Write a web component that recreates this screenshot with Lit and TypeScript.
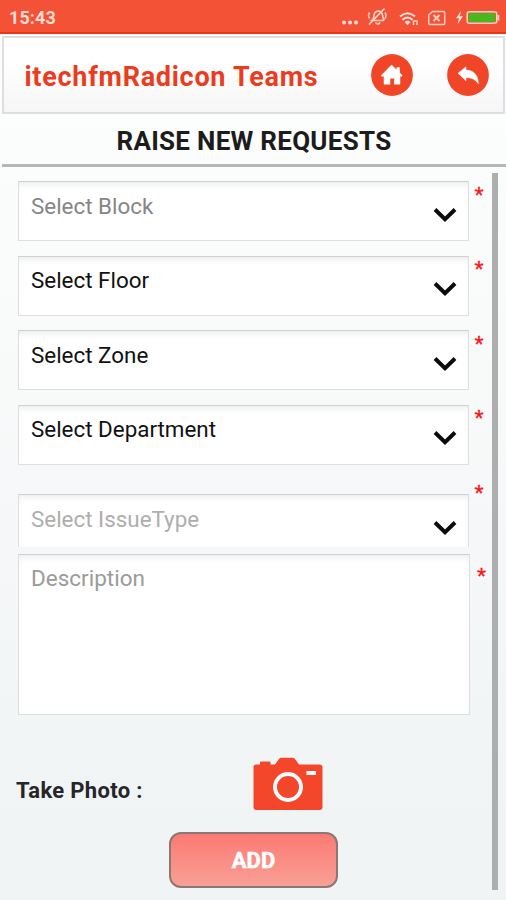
import { LitElement, html, css, svg } from "lit";
import { customElement, property } from "lit/decorators.js";
import { classMap } from "lit/directives/class-map.js";

@customElement("status-bar")
class StatusBar extends LitElement {
  static styles = css`
    :host { display: flex; box-sizing: border-box; height: 34px; background: #f35237;
      border-bottom: 2px solid #ee3413; color: #ffdcd2; align-items: center;
      justify-content: space-between; padding: 2px 5px 0 9px; }
    .time { font: 700 18px/30px Roboto, sans-serif; padding-top: 2px; letter-spacing: 0.1px; }
    svg { display: block; }
  `;
  render() {
    return html`
      <span class="time">15:43</span>
      <svg width="161" height="30" viewBox="340 2 161 30" fill="none" stroke="#ffd0c4" stroke-width="1.5">
        <g fill="#ffe0d8" stroke="none">
          <circle cx="344" cy="22.500" r="2" /><circle cx="350" cy="22.500" r="2" /><circle cx="356" cy="22.500" r="2" />
        </g>
        <path d="M370.500 20.500h13.500M372.500 20c2-2 1-5 2.200-7 1.200-2.200 4.800-2.500 6.500-.8 2 2 .8 5.300 3.300 8M375.500 22.500q2.500 3 4.500 0M369 24.500L384.500 8.500" stroke-width="1.7" />
        <path d="M369.500 12.500q-2 3 0 6M385 12.500q2 3 0 6" />
        <g stroke="#ffe0d8" stroke-width="2">
          <path d="M400 16.500q7.500-6.500 15 0M402.500 19.800q5-4.500 10 0" />
        </g>
        <path d="M404.500 22q3-2.500 6 0l-3 3.200z" fill="#ffe0d8" stroke="none" />
        <path d="M413.500 25v-4h3.500v4" stroke-width="1.500" />
        <path d="M432.500 11.500h11q1.200 0 1.200 1.200v10.600q0 1.200-1.200 1.200h-13.600q-1.200 0-1.200-1.200v-8.300z" />
        <path d="M433.500 15l6 6M439.500 15l-6 6" stroke-width="2" />
        <path d="M461 11l-5 7.300h3l-1.400 6 5.400-8h-3.200z" fill="#ffe0d8" stroke="none" />
        <rect x="467.200" y="11.700" width="29.500" height="11.500" rx="2" />
        <path d="M498.300 15v5.500" stroke-width="2" />
        <rect x="468.700" y="13.200" width="26.500" height="8.600" fill="#3fbd1d" stroke="none" />
        <path d="M474 13v9M479.300 13v9M484.600 13v9M490 13v9" stroke="#6aa524" stroke-width="1" />
      </svg>`;
  }
}

@customElement("round-button")
class RoundButton extends LitElement {
  @property() icon = "home";
  static styles = css`
    :host { display: block; width: 42px; height: 42px; }
    svg { display: block; }
  `;
  render() {
    const glyph = this.icon === "home"
      ? svg`<path d="M20.500 11L10.500 21.200v1h2.500v8h6v-6h4.400v6h5.600v-8h2v-1l-2.500-2.600v-5.100h-2.700v2.500z" />`
      : svg`<path d="M11 19.200L19 12.800v3.200c8 .2 12.500 5.600 12.300 13.800-2.700-4.200-6.300-6.300-12.300-6.100v3z" />`;
    return html`<svg width="42" height="42" viewBox="0 0 42 42">
      <circle cx="21" cy="21" r="20.900" fill="#f04527" />
      <g fill="#fff" stroke="#fff" stroke-width=".5" stroke-linejoin="round">${glyph}</g>
    </svg>`;
  }
}

@customElement("select-field")
class SelectField extends LitElement {
  @property() label = "";
  @property() tone = "active";
  @property({ type: Boolean }) clipped = false;
  static styles = css`
    :host { display: flex; align-items: flex-start; }
    .box { box-sizing: border-box; width: 451px; height: 60px; display: flex;
      justify-content: space-between; padding: 7.500px 11px 0 12px; background: #fff;
      border: 1.5px solid #dedfdf; border-top-color: #d0d2d2;
      box-shadow: inset 0 5px 7px -3px #e9ebeb; color: #111;
      font: 400 22.400px/32px Roboto, sans-serif; }
    .soft { color: #868686; }
    .faint { color: #aeaeae; }
    .clipped { height: 53px; border-bottom: 0; }
    svg { display: block; margin-top: 16px; }
    .star { margin: 1.500px 0 0 5.500px; color: #fc1414; font: 400 21px/24px Roboto, sans-serif; -webkit-text-stroke: 0.3px #fc1414; }
    .raised { margin-top: -13px; }
  `;
  render() {
    return html`
      <div class=${classMap({ box: true, soft: this.tone === "soft", faint: this.tone === "faint", clipped: this.clipped })}>
        <span>${this.label}</span>
        <svg width="24" height="18" viewBox="0 0 24 18" fill="none" stroke="#0b0b0b" stroke-width="3.900">
          <path d="M2 3.500l10 9.700 10-9.700" />
        </svg>
      </div>
      <span class=${classMap({ star: true, raised: this.clipped })}>*</span>`;
  }
}

@customElement("app-root")
class AppRoot extends LitElement {
  static styles = css`
    :host { display: flex; flex-direction: column; width: 506px; height: 900px; overflow: hidden;
      font-family: Roboto, sans-serif; background: linear-gradient(#fcfdfd 12%, #f1f4f5 90%); }
    header { box-sizing: border-box; height: 78px; margin: 2px 1px 0 2px; padding: 0 14px 0 20.500px;
      display: flex; align-items: center; gap: 34px; border: 2px solid #dcdfe2;
      background: linear-gradient(#fff 30%, #f6f6f6); }
    .brand { flex: 1; color: #ec3c20; font-size: 27px; font-weight: 700; letter-spacing: 0.720px; line-height: 34px; padding-top: 3px; white-space: nowrap; }
    h1 { box-sizing: border-box; height: 53px; margin: 0 0 0 2px; padding-top: 11px; text-align: center;
      font-size: 26px; line-height: 32px; font-weight: 700; letter-spacing: 0.280px; color: #1c1c1c; border-bottom: 3px solid #b5b7b7; }
    .body { display: flex; justify-content: space-between; height: 717px; margin: 6px 8px 0 16px; }
    .form { display: flex; flex-direction: column; width: 470px; padding-top: 8px; }
    .fields { display: flex; flex-direction: column; gap: 14.500px; padding-left: 2px; }
    .issue { margin-top: 15px; }
    .desc { display: flex; padding-left: 2px; margin-top: 7px; }
    .area { box-sizing: border-box; width: 453px; height: 161px; padding: 7px 12px; background: #fff;
      border: 1.5px solid #dedfdf; border-top-color: #cfd1d1; box-shadow: inset 0 5px 7px -3px #e9ebeb;
      color: #9b9b9b; font-size: 22.500px; line-height: 32px; }
    .star { color: #fc1414; font-size: 21px; line-height: 24px; margin: 10px 0 0 6.500px; -webkit-text-stroke: 0.3px #fc1414; }
    .photo { display: flex; align-items: flex-end; margin-top: 42px; }
    .caption { width: 236px; color: #262626; font-size: 22px; font-weight: 700; letter-spacing: 0.320px; line-height: 32px; padding-bottom: 4px; }
    svg { display: block; }
    button { box-sizing: border-box; width: 169px; height: 56px; margin: 21px 0 0 153px; padding: 1px 0 0;
      border: 2px solid #8b7775; border-radius: 12px; background: linear-gradient(#fb7a73, #f9a096);
      color: #fff; font: 700 22px/30px Roboto, sans-serif; -webkit-text-stroke: 0.5px #fff; }
    .track { width: 6px; background: #adafaf; }
  `;
  render() {
    return html`
      <status-bar></status-bar>
      <header>
        <span class="brand">itechfmRadicon Teams</span>
        <round-button icon="home"></round-button>
        <round-button icon="back"></round-button>
      </header>
      <h1>RAISE NEW REQUESTS</h1>
      <div class="body">
        <div class="form">
          <div class="fields">
            <select-field label="Select Block" tone="soft"></select-field>
            <select-field label="Select Floor"></select-field>
            <select-field label="Select Zone"></select-field>
            <select-field label="Select Department"></select-field>
            <select-field class="issue" label="Select IssueType" tone="faint" clipped></select-field>
          </div>
          <div class="desc">
            <div class="area">Description</div>
            <span class="star">*</span>
          </div>
          <div class="photo">
            <span class="caption">Take Photo :</span>
            <svg width="72" height="54" viewBox="252 757 72 54">
              <path fill="#f4462a" d="M256.500 764.500h3.500v-2q0-1 1-1h8.500q1 0 1 1v2h4.500l4-5.500q.8-1.300 2-1.300h12q1.200 0 2 1.300l4 5.500h20.500q3 0 3 3v39.500q0 3-3 3h-63q-3 0-3-3v-39.500q0-3 3-3z" />
              <circle cx="288" cy="787" r="13" fill="none" stroke="#fff" stroke-width="3.900" />
              <rect x="306.500" y="771" width="9.500" height="4" fill="#fff" />
            </svg>
          </div>
          <button>ADD</button>
        </div>
        <div class="track"></div>
      </div>`;
  }
}
